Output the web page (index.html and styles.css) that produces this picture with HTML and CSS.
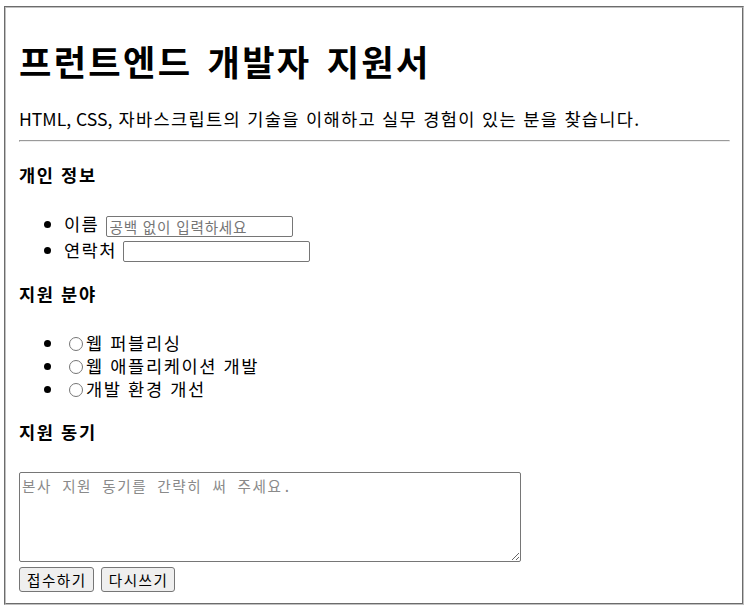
FILE: index.html
```html
<!DOCTYPE html>
<html lang="ko">
<head>
    <meta charset="UTF-8">
    <meta name="viewport" content="width=device-width, initial-scale=1.0">
    <title>프런트엔드 개발자 지원서</title>
    <link rel="stylesheet" href="styles.css">
</head>
<body>
    <form class="apply">
        <h1>프런트엔드 개발자 지원서</h1>
        <p class="lead"><span class="tech">HTML, CSS,</span> 자바스크립트의 기술을 이해하고 실무 경험이 있는 분을 찾습니다.</p>
        <hr>

        <h4 class="section-title">개인 정보</h4>
        <ul class="field-list">
            <li><label>이름 <input type="text" class="text-input" placeholder="공백 없이 입력하세요"></label></li>
            <li><label>연락처 <input type="tel" class="text-input"></label></li>
        </ul>

        <h4 class="section-title">지원 분야</h4>
        <ul class="option-list">
            <li><label><input type="radio" name="field" value="publishing">웹 퍼블리싱</label></li>
            <li><label><input type="radio" name="field" value="webapp">웹 애플리케이션 개발</label></li>
            <li><label><input type="radio" name="field" value="devenv">개발 환경 개선</label></li>
        </ul>

        <h4 class="section-title">지원 동기</h4>
        <textarea class="motive" placeholder="본사 지원 동기를 간략히 써 주세요."></textarea>
        <div class="actions">
            <button type="submit">접수하기</button>
            <button type="reset">다시쓰기</button>
        </div>
    </form>
</body>
</html>
```

FILE: styles.css
```css
body {
    margin: 0;
    font-family: "Noto Sans CJK KR", "Noto Sans", sans-serif;
    font-size: 17.6px;
    color: #000;
    background-color: #fff;
}
.apply {
    margin: 6px 7px 6px 4px;
    border: 2px groove #c0c0c0;
    padding: 0 12px 11px 13px;
}
h1 {
    font-size: 35.2px;
    line-height: 46px;
    margin: 30px 0 0;
    letter-spacing: 2.3px;
    word-spacing: 3px;
}
.lead {
    line-height: 24px;
    margin: 23px 0 0;
    letter-spacing: 1.3px;
}
.lead .tech {
    letter-spacing: normal;
}
hr {
    margin: 9px 0 0;
}
.section-title {
    font-size: 17.6px;
    line-height: 24px;
    margin: 21px 0 0;
    letter-spacing: 1.6px;
}
.field-list {
    margin: 24px 0 0;
    padding-left: 45px;
    line-height: 25px;
    letter-spacing: 1.4px;
}
.text-input {
    font-family: "Noto Sans CJK KR", sans-serif;
    font-size: 14.6px;
    letter-spacing: 0.8px;
    width: 187px;
    height: 21px;
    box-sizing: border-box;
    border: 1px solid #767676;
    border-radius: 2px;
    padding: 0 3px;
    margin: 0;
    vertical-align: middle;
}
.text-input::placeholder {
    color: #757575;
}
.section-title + .option-list {
    margin-top: 25px;
}
.option-list {
    padding-left: 45px;
    line-height: 23px;
    letter-spacing: 1.6px;
}
.option-list input {
    width: 14px;
    height: 14px;
    margin: 0 3px 0 5px;
    vertical-align: -1px;
}
.option-list + .section-title {
    margin-top: 20px;
}
.field-list + .section-title {
    margin-top: 20px;
}
.motive {
    display: block;
    box-sizing: border-box;
    width: 502px;
    height: 90px;
    margin: 28px 0 0;
    padding: 2px;
    border: 1px solid #767676;
    border-radius: 2px;
    font-family: "DejaVu Sans Mono", "Noto Sans CJK KR", monospace;
    font-size: 14.6px;
    letter-spacing: 1.5px;
}
.motive::placeholder {
    color: #8a8a8a;
}
.actions {
    display: flex;
    gap: 7px;
    margin-top: 5px;
}
.actions button {
    font-family: "Noto Sans CJK KR", sans-serif;
    font-size: 14.6px;
    letter-spacing: 1.5px;
    box-sizing: border-box;
    height: 25px;
    padding: 0 6px 0 7px;
    border: 1px solid #767676;
    border-radius: 3px;
    background-color: #efefef;
    color: #000;
}
```
